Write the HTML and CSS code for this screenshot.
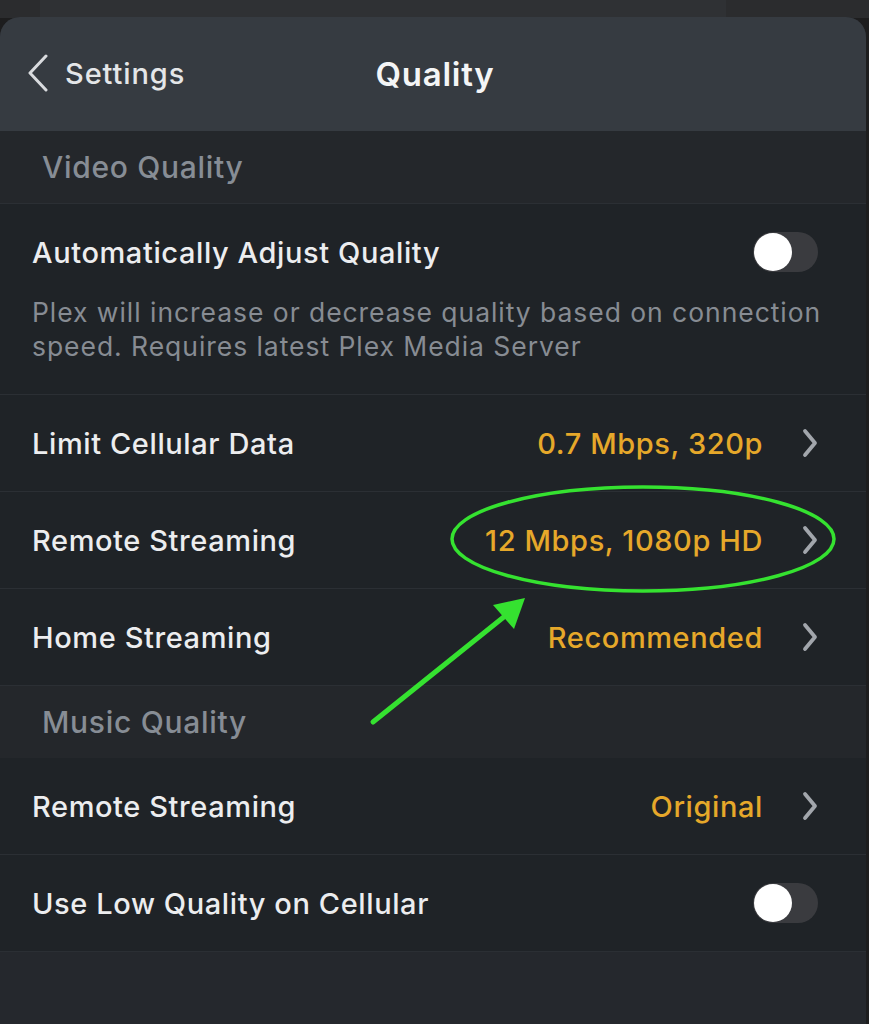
FILE: index.html
```html
<!DOCTYPE html>
<html lang="en">
<head>
    <meta charset="UTF-8">
    <meta name="viewport" content="width=device-width, initial-scale=1.0">
    <title>Quality</title>
    <link rel="stylesheet" href="styles.css">
</head>
<body>
    <div class="backdrop">
        <div class="backdrop-card"></div>
    </div>

    <div class="sheet">
        <header class="nav">
            <a class="back" href="#">
                <svg class="back-icon" width="22" height="38" viewBox="0 0 22 38">
                    <polyline points="19,2 3,19 19,36" fill="none" stroke="#d9dbde" stroke-width="3" stroke-linecap="round" stroke-linejoin="round"/>
                </svg>
                <span>Settings</span>
            </a>
            <h1 class="title">Quality</h1>
        </header>

        <div class="section-title">Video Quality</div>

        <div class="row row-tall">
            <div class="row-main">
                <span class="label">Automatically Adjust Quality</span>
                <span class="toggle"><span class="knob"></span></span>
            </div>
            <p class="hint">Plex will increase or decrease quality based on connection speed. Requires latest Plex Media Server</p>
        </div>

        <div class="row">
            <span class="label">Limit Cellular Data</span>
            <span class="value">0.7 Mbps, 320p</span>
            <svg class="chevron" width="16" height="30" viewBox="0 0 16 30"><polyline points="3,3 13,15 3,27"/></svg>
        </div>

        <div class="row">
            <span class="label">Remote Streaming</span>
            <span class="value">12 Mbps, 1080p HD</span>
            <svg class="chevron" width="16" height="30" viewBox="0 0 16 30"><polyline points="3,3 13,15 3,27"/></svg>
        </div>

        <div class="row">
            <span class="label">Home Streaming</span>
            <span class="value">Recommended</span>
            <svg class="chevron" width="16" height="30" viewBox="0 0 16 30"><polyline points="3,3 13,15 3,27"/></svg>
        </div>

        <div class="section-title">Music Quality</div>

        <div class="row">
            <span class="label">Remote Streaming</span>
            <span class="value">Original</span>
            <svg class="chevron" width="16" height="30" viewBox="0 0 16 30"><polyline points="3,3 13,15 3,27"/></svg>
        </div>

        <div class="row row-last">
            <span class="label">Use Low Quality on Cellular</span>
            <span class="toggle"><span class="knob"></span></span>
        </div>

        <div class="filler"></div>
    </div>

    <!-- annotation drawn over the screenshot -->
    <svg class="markup" width="869" height="1024" viewBox="0 0 869 1024">
        <ellipse cx="643" cy="539" rx="191" ry="52" fill="none" stroke="#35e230" stroke-width="3.5"/>
        <line x1="373" y1="722" x2="505" y2="616" stroke="#35e230" stroke-width="5" stroke-linecap="round"/>
        <polygon points="525,598 493,605 514,629" fill="#35e230"/>
    </svg>
</body>
</html>
```

FILE: styles.css
```css
body {
    margin: 0;
    padding: 0;
    background: #1d1d1e;
    font-family: Inter, "Noto Sans", sans-serif;
    position: relative;
    width: 869px;
    height: 1024px;
    overflow: hidden;
}

.backdrop {
    height: 18px;
    background: #2b2c2e;
    display: flex;
}

.backdrop-card {
    margin-left: 40px;
    width: 686px;
    background: #2f3134;
}

.sheet {
    width: 866px;
    background: #25282d;
    border-radius: 20px 20px 0 0;
    overflow: hidden;
    margin-top: -1px;
    height: 1007px;
    display: flex;
    flex-direction: column;
}

.nav {
    height: 114px;
    background: #363b41;
    display: flex;
    align-items: center;
    position: relative;
    flex-shrink: 0;
}

.back {
    display: flex;
    align-items: center;
    gap: 16px;
    padding-left: 27px;
    color: #e4e6e8;
    text-decoration: none;
    font-size: 29px;
    font-weight: 500;
    letter-spacing: 0.9px;
    margin-top: -2px;
}

.title {
    position: absolute;
    left: 0;
    right: 0;
    margin: 0;
    text-align: center;
    font-size: 33px;
    font-weight: 600;
    color: #f4f5f6;
    letter-spacing: 0.75px;
    padding-left: 4px;
    pointer-events: none;
}

.section-title {
    height: 72px;
    display: flex;
    align-items: center;
    padding-left: 42px;
    font-size: 30px;
    font-weight: 500;
    color: #878d95;
    letter-spacing: 0.7px;
    background: #24272b;
    flex-shrink: 0;
}

.row {
    background: #1f2327;
    border-bottom: 1px solid #2b2f34;
    height: 96px;
    display: flex;
    align-items: center;
    padding: 0 48px 0 32px;
    flex-shrink: 0;
}

.row-tall {
    height: auto;
    display: block;
    padding: 26px 48px 31px 32px;
    border-top: 1px solid #2b2f34;
}

.row-main {
    display: flex;
    align-items: center;
    justify-content: space-between;
    height: 44px;
}

.label {
    font-size: 29px;
    font-weight: 500;
    color: #ecedef;
    letter-spacing: 0.6px;
    flex: 1;
}

.value {
    font-size: 29px;
    font-weight: 500;
    color: #e6a82a;
    letter-spacing: 0.6px;
    margin-right: 39px;
}

.chevron {
    fill: none;
    stroke: #a2a6ac;
    stroke-width: 3.8;
    stroke-linecap: round;
    stroke-linejoin: round;
}

.hint {
    margin: 21px -16px 0 0;
    font-size: 26.5px;
    line-height: 34px;
    color: #878c93;
    letter-spacing: 0.95px;
}

.toggle {
    width: 65px;
    height: 40px;
    border-radius: 20px;
    background: #3a3b3f;
    display: flex;
    align-items: center;
    padding-left: 1px;
    box-sizing: border-box;
}

.knob {
    width: 38px;
    height: 38px;
    border-radius: 50%;
    background: #ffffff;
}

.filler {
    flex: 1;
    background: #25282d;
}

.markup {
    position: absolute;
    top: 0;
    left: 0;
    pointer-events: none;
}
```
